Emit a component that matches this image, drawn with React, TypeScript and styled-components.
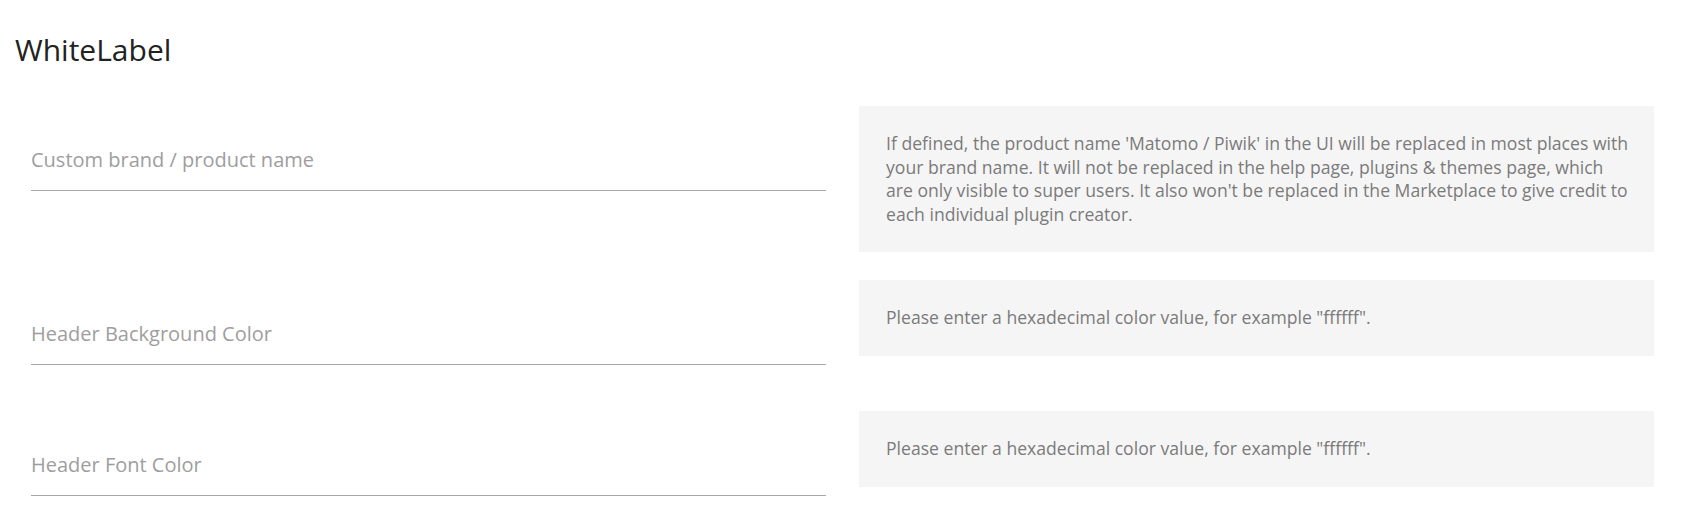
import React from 'react';
import styled, { createGlobalStyle } from 'styled-components';

const GlobalStyle = createGlobalStyle`
  html, body {
    margin: 0;
    padding: 0;
    background: #ffffff;
  }
  body {
    font-family: "Open Sans", "Noto Sans", Arial, sans-serif;
  }
`;

const Page = styled.div`
  padding: 0 43px 0 15px;
`;

const Title = styled.h2`
  margin: 32px 0 38px;
  font-size: 30px;
  line-height: 36px;
  font-weight: 400;
  color: #222222;
`;

const Field = styled.div`
  padding-top: 42px;
  margin-bottom: 46px;
`;

const Label = styled.label`
  display: block;
  font-size: 20px;
  line-height: 24px;
  color: #9e9e9e;
`;

const Underline = styled.div`
  margin-top: 18px;
  height: 1px;
  background: #a8a8a8;
`;

const Help = styled.div`
  background: #f5f5f5;
  padding: 26px 24px 26px 27px;
  margin-bottom: 28px;
  font-size: 17.6px;
  line-height: 23.6px;
  color: #7b7b7b;
`;

const Row = styled.div`
  display: grid;
  grid-template-columns: 1fr 1fr;
  column-gap: 33px;
  align-items: start;
  padding-left: 16px;

  &:last-child ${Field}, &:last-child ${Help} {
    margin-bottom: 0;
  }
`;

const settings = [
  {
    label: 'Custom brand / product name',
    help:
      "If defined, the product name 'Matomo / Piwik' in the UI will be replaced in most places with your brand name. It will not be replaced in the help page, plugins & themes page, which are only visible to super users. It also won't be replaced in the Marketplace to give credit to each individual plugin creator.",
  },
  {
    label: 'Header Background Color',
    help: 'Please enter a hexadecimal color value, for example "ffffff".',
  },
  {
    label: 'Header Font Color',
    help: 'Please enter a hexadecimal color value, for example "ffffff".',
  },
];

export default function App() {
  return (
    <Page>
      <GlobalStyle />
      <Title>WhiteLabel</Title>
      {settings.map((s) => (
        <Row key={s.label}>
          <Field>
            <Label>{s.label}</Label>
            <Underline />
          </Field>
          <Help>{s.help}</Help>
        </Row>
      ))}
    </Page>
  );
}
